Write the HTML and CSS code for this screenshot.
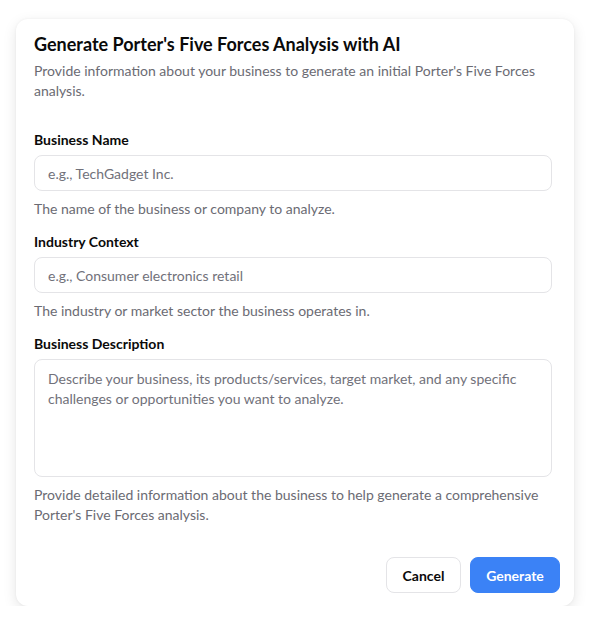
FILE: index.html
```html
<!DOCTYPE html>
<html>
<head>
<meta charset="utf-8">
<link rel="stylesheet" href="styles.css">
</head>
<body>
<div class="card">
  <h2 class="title">Generate Porter's Five Forces Analysis with AI</h2>
  <p class="subtitle">Provide information about your business to generate an initial Porter's Five Forces analysis.</p>
  <div class="form">
    <div class="field first">
      <label class="label">Business Name</label>
      <input class="input" type="text" placeholder="e.g., TechGadget Inc.">
      <p class="help">The name of the business or company to analyze.</p>
    </div>
    <div class="field">
      <label class="label">Industry Context</label>
      <input class="input" type="text" placeholder="e.g., Consumer electronics retail">
      <p class="help">The industry or market sector the business operates in.</p>
    </div>
    <div class="field">
      <label class="label">Business Description</label>
      <textarea class="input textarea" placeholder="Describe your business, its products/services, target market, and any specific challenges or opportunities you want to analyze."></textarea>
      <p class="help">Provide detailed information about the business to help generate a comprehensive Porter's Five Forces analysis.</p>
    </div>
  </div>
  <div class="actions">
    <button class="btn btn-outline">Cancel</button>
    <button class="btn btn-primary">Generate</button>
  </div>
</div>
</body>
</html>
```
FILE: styles.css
```css
* { box-sizing: border-box; }
html, body { margin: 0; padding: 0; background: #ffffff; }
body {
  font-family: Lato, "Noto Sans", sans-serif;
  color: #0a0a0a;
  padding: 19px 16px 0 16px;
}
.card {
  width: 558px;
  height: 587px;
  background: #fff;
  border-radius: 12px;
  box-shadow: 0 4px 14px rgba(0,0,0,0.10), 0 0 3px rgba(0,0,0,0.05);
  padding: 13px 14px 13px 18px;
  display: flex;
  flex-direction: column;
}
.title {
  margin: 0;
  font-size: 18px;
  line-height: 24px;
  font-weight: 700;
}
.subtitle {
  margin: 5px 0 0 0;
  font-size: 14px;
  line-height: 20px;
  color: #6b6b73;
  width: 518px;
}
.form { width: 518px; }
.field { margin-top: 13px; }
.field.first { margin-top: 29px; }
.label {
  display: block;
  font-size: 14px;
  line-height: 20px;
  font-weight: 700;
}
.input {
  display: block;
  width: 518px;
  height: 36px;
  margin-top: 5px;
  border: 1px solid #e4e4e7;
  border-radius: 8px;
  padding: 0 13px;
  font-family: inherit;
  font-size: 14px;
  color: #0a0a0a;
  background: #fff;
  outline: none;
}
.input::placeholder { color: #71717a; }
.textarea {
  height: 118px;
  padding: 9px 13px;
  line-height: 20px;
  resize: none;
}
.help {
  margin: 8px 0 0 0;
  font-size: 14px;
  line-height: 20px;
  color: #6b6b73;
}
.actions {
  margin-top: auto;
  display: flex;
  justify-content: flex-end;
  gap: 9px;
}
.btn {
  height: 36px;
  border-radius: 8px;
  font-family: inherit;
  font-size: 14px;
  font-weight: 700;
  padding: 0;
  cursor: pointer;
}
.btn-outline {
  background: #fff;
  border: 1px solid #e4e4e7;
  color: #0a0a0a;
  width: 75px;
}
.btn-primary {
  background: #3b82f6;
  border: 1px solid #3b82f6;
  color: #fff;
  width: 90px;
}
```
